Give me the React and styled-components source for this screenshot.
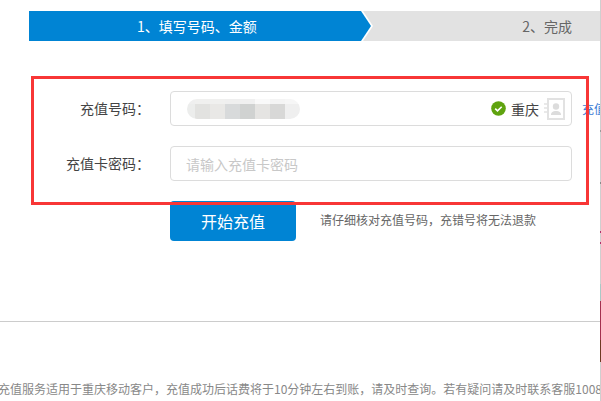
import React from 'react'
import styled, { createGlobalStyle } from 'styled-components'

const COLON = '\uFF1A'
const COMMA = '\uFF0C'

const GlobalStyle = createGlobalStyle`
html, body {
    margin: 0;
    padding: 0;
    background: #fff;
}
body {
    font-family: "Noto Sans CJK SC", "Liberation Sans", sans-serif;
    overflow: hidden;
}
`

const Page = styled.div`
position: relative;
display: flex;
width: 601px;
height: 401px;
overflow: hidden;
`

const Main = styled.div`
width: 600px;
flex: none;
padding-top: 11px;
overflow: hidden;
`

/* thin sliver of the next window at the right edge */
const Edge = styled.div`
width: 1px;
flex: none;
background: linear-gradient(
    to bottom,
    #cfcfcf 0 130px,
    #9a9a9a 130px 132px,
    #cfcfcf 132px 182px,
    #8a8a8a 182px 184px,
    #cfcfcf 184px 231px,
    #b0306a 231px 233px,
    #cfcfcf 233px 242px,
    #b0306a 242px 244px,
    #cfcfcf 244px 284px,
    #a9c9c6 284px 301px,
    #a3304e 301px 340px,
    #6e3a22 340px 362px,
    #cfcfcf 362px
);
`

const Steps = styled.div`
display: flex;
justify-content: space-between;
align-items: center;
height: 30px;
margin-left: 29px;
background: #e2e2e2;
color: #666;
font-size: 14px;
line-height: 28px;
`

const ActiveStep = styled.div`
position: relative;
display: flex;
align-items: center;
width: 332px;
height: 30px;
padding-left: 108px;
box-sizing: border-box;
background: #0084d4;
color: #fff;
&::before,
&::after {
    content: '';
    position: absolute;
    top: 0;
    height: 30px;
}
&::before {
    left: 100%;
    width: 12px;
    background: #fff;
    clip-path: polygon(0 0, 2px 0, 12px 50%, 2px 100%, 0 100%);
}
&::after {
    left: 100%;
    width: 10px;
    background: #0084d4;
    clip-path: polygon(0 0, 100% 50%, 0 100%);
}
`

const NextStep = styled.div`
padding-right: 28px;
`

const Form = styled.div`
margin-top: 50px;
`

const Row = styled.div`
display: flex;
align-items: center;
height: 35px;
margin-bottom: 20px;
`

const Label = styled.div`
width: 150px;
flex: none;
text-align: right;
color: #444;
font-size: 14px;
line-height: 18px;
margin-top: -2px;
`

const Field = styled.div`
display: flex;
align-items: center;
justify-content: space-between;
width: 402px;
height: 35px;
flex: none;
margin-left: 20px;
padding: 0 6px 0 16px;
box-sizing: border-box;
border: 1px solid #dcdcdc;
border-radius: 4px;
background: #fff;
`

const Mosaic = styled.div`
display: grid;
grid-template-columns: 8px repeat(7, 15px);
grid-template-rows: 5px 15px;
border-radius: 10px;
overflow: hidden;
`

const Tile = styled.div`
background: ${props => props.$tone};
`

const Region = styled.div`
display: flex;
align-items: center;
gap: 5px;
color: #444;
font-size: 14px;
`

const CardInput = styled.input`
width: 402px;
height: 35px;
flex: none;
margin-left: 20px;
padding: 0 15px;
box-sizing: border-box;
border: 1px solid #dcdcdc;
border-radius: 4px;
outline: none;
font-family: inherit;
font-size: 14px;
&::placeholder {
    color: #c8c8c8;
    opacity: 1;
}
`

const RecordLink = styled.a`
margin-left: 10px;
color: #3a7bd5;
font-size: 12px;
white-space: nowrap;
`

const Submit = styled.div`
display: flex;
align-items: center;
gap: 24px;
margin-left: 170px;
`

const StartButton = styled.button`
width: 126px;
height: 40px;
border: 0;
border-radius: 4px;
background: #0084d4;
color: #fff;
font-family: inherit;
font-size: 16px;
`

const Hint = styled.span`
color: #666;
font-size: 12px;
line-height: 16px;
margin-top: -3px;
`

const Divider = styled.div`
height: 1px;
margin-top: 80px;
background: #cccccc;
`

const Notice = styled.p`
margin: 59px 0 0 -2px;
color: #888;
font-size: 12px;
line-height: 16px;
white-space: nowrap;
`

const Annotation = styled.div`
position: absolute;
left: 31px;
top: 76px;
width: 558px;
height: 129px;
box-sizing: border-box;
border: 3px solid #f83636;
pointer-events: none;
`

const Bump = styled.div`
position: absolute;
left: 384px;
top: 173px;
width: 20px;
height: 20px;
border-radius: 50%;
background: #f9f9f9;
z-index: -1;
`

const tones = [
    ['#efefef', '#ecedec'],
    ['#f0f0ef', '#e2e2e0'],
    ['#f0f0ef', '#e9e8e6'],
    ['#efefef', '#d8dadb'],
    ['#f0f0f0', '#d0d2d1'],
    ['#f9f9f9', '#e5e4e2'],
    ['#f4f4f4', '#d8d8d7'],
    ['#f6f6f6', '#efefef'],
]

const CheckBadge = () => (
    <svg width="15" height="15" viewBox="0 0 15 15">
        <circle cx="7.5" cy="7.5" r="7.3" fill="#5fa30f" />
        <path d="M4.2 7.6l2.3 2.3 4.2-4.2" fill="none" stroke="#fff" strokeWidth="1.6" />
    </svg>
)

const ContactBook = () => (
    <svg width="21" height="22" viewBox="0 0 21 22">
        <rect x="4" y="1" width="16" height="20" fill="#fff" stroke="#e2e2e2" strokeWidth="2" />
        <path d="M0 6h4M0 10h4M0 14h4" stroke="#e2e2e2" strokeWidth="1.5" />
        <circle cx="12" cy="8.5" r="3.2" fill="#dcdcdc" />
        <path d="M7 17c0-3 2-4 5-4s5 1 5 4z" fill="#dcdcdc" />
    </svg>
)

export default function App() {
    return (
        <Page>
            <GlobalStyle />
            <Main>
                <Steps>
                    <ActiveStep>1、填写号码、金额</ActiveStep>
                    <NextStep>2、完成</NextStep>
                </Steps>
                <Form>
                    <Row>
                        <Label>{'充值号码' + COLON}</Label>
                        <Field>
                            <Mosaic>
                                {tones.map((t, i) => <Tile key={'t' + i} $tone={t[0]} />)}
                                {tones.map((t, i) => <Tile key={'b' + i} $tone={t[1]} />)}
                            </Mosaic>
                            <Region>
                                <CheckBadge />
                                重庆
                                <ContactBook />
                            </Region>
                        </Field>
                        <RecordLink>充值记录</RecordLink>
                    </Row>
                    <Row>
                        <Label>{'充值卡密码' + COLON}</Label>
                        <CardInput placeholder="请输入充值卡密码" />
                    </Row>
                </Form>
                <Submit>
                    <StartButton>开始充值</StartButton>
                    <Hint>{'请仔细核对充值号码' + COMMA + '充错号将无法退款'}</Hint>
                </Submit>
                <Divider />
                <Notice>{'充值服务适用于重庆移动客户' + COMMA + '充值成功后话费将于10分钟左右到账' + COMMA + '请及时查询。若有疑问请及时联系客服10086'}</Notice>
            </Main>
            <Edge />
            <Bump />
            <Annotation />
        </Page>
    )
}
